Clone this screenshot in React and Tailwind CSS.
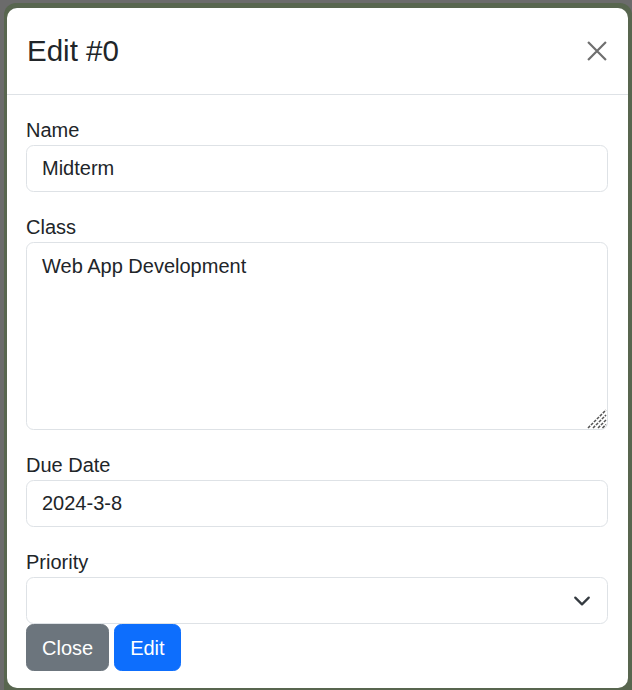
import React from 'react';

const Field = ({ label, children, last }) => (
  <div className={last ? '' : 'mb-[20px]'}>
    <label className="block text-[20px] leading-[30px] text-[#212529]">{label}</label>
    {children}
  </div>
);

const inputCls =
  'block w-full h-[47px] px-[15px] text-[20px] leading-[30px] text-[#212529] bg-white border border-[#dee2e6] rounded-[7.5px] outline-none';

export default function App() {
  return (
    <div
      className="h-[690px] overflow-hidden bg-[#6b6b6b] pt-[3px] pl-[4px]"
      style={{ fontFamily: '"Liberation Sans", Arial, sans-serif' }}
    >
      <div className="h-full bg-[#58664f] rounded-t-[12px] pt-[5px] pl-[3px] pr-[4px]">
        <div className="h-[680px] bg-white rounded-[10px]">
          {/* Header */}
          <div className="h-[87px] flex items-center justify-between px-[20px] border-b border-[#dee2e6]">
            <h1 className="text-[29.5px] leading-[38px] text-[#212529]">Edit #0</h1>
            <button className="w-[24px] h-[24px] flex items-center justify-center mr-[-1px]">
              <svg width="22" height="22" viewBox="0 0 16 16">
                <path d="M1.5 1.5l13 13M14.5 1.5l-13 13" stroke="#6f6f6f" strokeWidth="1.6" fill="none" />
              </svg>
            </button>
          </div>

          {/* Body */}
          <div className="pt-[20px] pl-[19px] pr-[20px]">
            <Field label="Name">
              <input className={inputCls} defaultValue="Midterm" readOnly />
            </Field>
            <Field label="Class">
              <div className="relative">
                <textarea
                  className="block w-full h-[188px] px-[15px] py-[7.5px] text-[20px] leading-[30px] text-[#212529] bg-white border border-[#dee2e6] rounded-[7.5px] outline-none resize-none"
                  defaultValue="Web App Development"
                  readOnly
                />
                {/* resize grip */}
                <svg
                  className="absolute right-[1px] bottom-[1px] pointer-events-none"
                  width="20"
                  height="20"
                  viewBox="0 0 20 20"
                >
                  <g stroke="#555" strokeWidth="1.5" strokeDasharray="3 1.2">
                    <path d="M1 19L19 1" />
                    <path d="M6 19L19 6" />
                    <path d="M11 19L19 11" />
                    <path d="M15.5 19L19 15.5" />
                  </g>
                </svg>
              </div>
            </Field>
            <Field label="Due Date">
              <input className={inputCls} defaultValue="2024-3-8" readOnly />
            </Field>
            <Field label="Priority" last>
              <div className="relative">
                <select className={inputCls + ' appearance-none'} defaultValue="">
                  <option value=""></option>
                </select>
                <svg
                  className="absolute right-[17px] top-[15px] pointer-events-none"
                  width="18"
                  height="18"
                  viewBox="0 0 16 16"
                >
                  <path
                    d="m2 5 6 6 6-6"
                    fill="none"
                    stroke="#343a40"
                    strokeWidth="2"
                    strokeLinecap="round"
                    strokeLinejoin="round"
                  />
                </svg>
              </div>
            </Field>
            <div className="flex gap-[5px]">
              <button className="h-[47px] px-[15px] text-[20px] leading-[30px] text-white bg-[#6c757d] border border-[#6c757d] rounded-[7.5px]">
                Close
              </button>
              <button className="h-[47px] px-[15px] text-[20px] leading-[30px] text-white bg-[#0d6efd] border border-[#0d6efd] rounded-[7.5px]">
                Edit
              </button>
            </div>
          </div>
        </div>
      </div>
    </div>
  );
}
